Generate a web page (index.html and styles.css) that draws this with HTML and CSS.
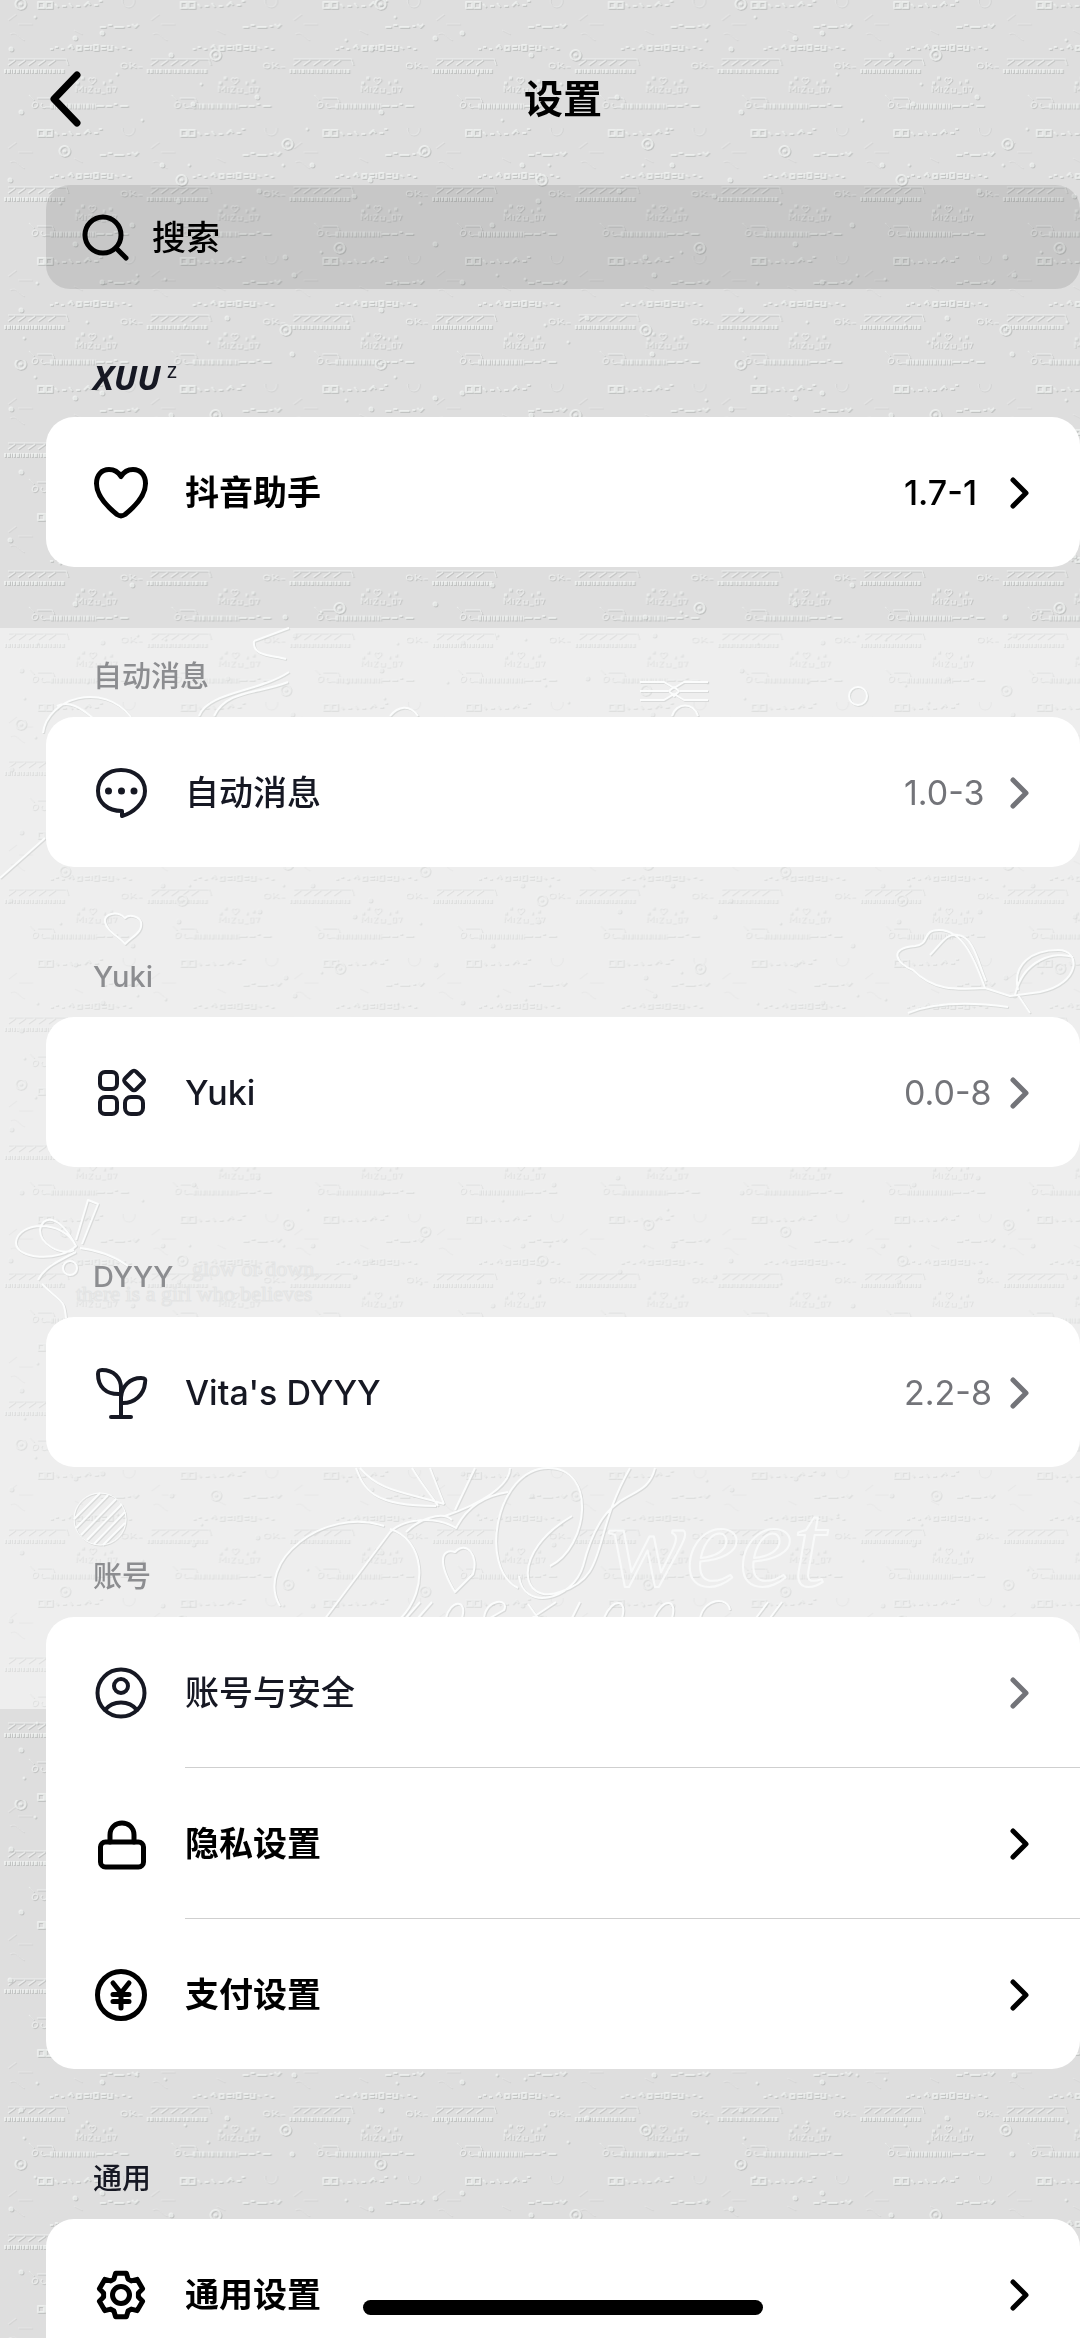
FILE: index.html
```
<!DOCTYPE html>
<html lang="zh-CN">
<head>
    <meta charset="UTF-8">
    <meta name="viewport" content="width=device-width, initial-scale=1.0">
    <title>设置</title>
    <link rel="stylesheet" href="styles.css">
</head>
<body>
    <!-- Embossed wallpaper -->
    <svg class="wallpaper" aria-hidden="true">
        <defs>
            <g id="marks" fill="none">
                <path d="M50 49h3m2-2h3m3 2h3m4-1l3-3 2 4m4-3h4v4h-4zm7 0h5m-5 3h5m2-4v5m3-5h4v5h-4zm7 1h5m-5 3h5m2-4v5h4v-5m3 2l3 2m4-2h3m3 2h3" stroke-width="2"/>
                <path d="M8 59h58l2 6M8 65l7-5m3 5l7-5m3 5l7-5m3 5l7-5m3 5l7-5" stroke-width="1"/>
                <path d="M4 71h60" stroke-width="4" stroke-dasharray="2 1 3 1 1 1"/>
                <path d="M124 63c-4 0-4 5 0 5s4-5 0-5M130 62v6l5-5m-4 2l5 3M138 67h5" stroke-width="1"/>
                <path d="M76 83h3m2-5h3m19 5h2m4-2h3" stroke-width="3"/>
                <path d="M92 79c2-3 5 0 3 2l-3 3-3-3c-1-2 1-5 3-2z" stroke-width="1"/>
                <path d="M76 92v-6l3 4 3-4v6M85 92v-5M88 87h4l-4 5h4M95 88v4h4v-4M101 93h4M107 87h3v5h-3zM112 87h4l-2 5" stroke-width="1"/>
                <path d="M29 95l5 5m3-2h15l2 4m-21 1c-2 3 0 6 3 4 4-3 0-7-3-4zm9 0c-3 3 1 6 3 4h5" stroke-width="1"/>
                <path d="M50 106h46" stroke-width="5" stroke-dasharray="3 1 1 1 2 1"/>
                <path d="M96 106h8m2 0h6m2-2h3m3 2h8" stroke-width="2"/>
                <path d="M38 2h6v6h-6zM46 2h6v6h-6zM55 4l3 3m4-1h4m3-3l3 4m4-1h4m4 0l4-4 2 3m4 0h4m1-4h3" stroke-width="2"/>
                <path d="M100 27h6m2-2h4m2 2h10m3-1h3m2-2l3 3 3-3" stroke-width="2"/>
                <circle cx="128" cy="1" r="6" stroke-width="1" opacity="0.5"/>
                <path d="M8 20l8-6m2 10h14M10 34c6-4 8 4 14 6M74 30l8 4" stroke-width="1" opacity="0.4"/>
            </g>
            <g id="bubbles" fill="none" stroke-linecap="round">
                <path d="M102 33h0M171 55h0M257 97h0M21 112h0M193 104h0M162 165h0M312 165h0M10 180h0M259 191h0M354 196h0M178 201h0M132 225h0M75 244h0M285 257h0M102 282h0M294 275h0M21 310h0M227 318h0M292 354h0M75 38h0M11 49h0" stroke-width="5"/>
                <path d="M117 74h0M201 84h0M142 120h0M307 129h0M189 165h0M283 165h0M60 203h0M321 252h0M37 283h0M165 279h0M137 275h0M185 325h0M347 322h0M87 322h0M24 338h0M208 342h0M35 17h0M346 40h0" stroke-width="3"/>
                <path d="M20 -1a5 5 0 1 0 1 0M215 50a5 5 0 1 0 1 0M287 139a5 5 0 1 0 1 0M64 146a5 5 0 1 0 1 0M181 175a5 5 0 1 0 1 0M339 243a5 5 0 1 0 1 0M285 325a5 5 0 1 0 1 0" stroke-width="2"/>
                <path d="M20 4h1M215 55h1M287 144h1M64 151h1M181 180h1M339 248h1M285 330h1" stroke-width="3"/>
            </g>
            <g id="ornaments" fill="none" stroke-width="2">
                <!-- ribbons -->
                <path d="M43 733c4-35 60-52 88-16M57 706c12-6 24 2 36 12M254 641l35-13M254 641c-2 16 18 14 32 18M289 672c-30 20-82 20-90 44M288 682c-30 12-62 8-74 34M0 878l45-40M390 716c8-10 20-12 28 0"/>
                <path d="M640 682h24l10 6 10-6h24M640 700h24l10-6 10 6h24M640 691h28M680 691h28M674 687l5 4-5 5-5-5z"/>
                <circle cx="858" cy="696" r="9"/>
                <path d="M672 716c4-14 22-14 26 0"/>
                <path d="M125 918c-8-8-22-4-20 4 2 10 14 14 20 22 8-8 18-12 16-22-2-6-12-8-16-4z"/>
                <!-- bows -->
                <path d="M985 988c-8-22-20-58-46-58-18 0-8 14-24 16-28 2-18 18-2 24 20 20 40 20 72 18M930 955c12-12 16-22 28-20 16 2 20 28 28 46M1018 990c-6-26 14-40 40-40 24 0 22 34-18 42l-30 4-25-8M1015 995c8-36 40-44 58-38M908 1013c30-12 70-10 100-6M1018 995l12 18"/>
                <path d="M76 1246c-14-28-58-24-60-4-1 18 44 20 60 4zM76 1246c-18-34-34-30-36-16 0 14 20 26 34 20M76 1240l12-40 10 4-16 40M80 1248c16 2 32 6 48 18M76 1252c-20 10-32 16-38 28M42 1284c20 20 22 14 24 34"/>
                <circle cx="70" cy="1268" r="7"/>
                <!-- striped ball -->
                <circle cx="100" cy="1519" r="26" stroke-width="1"/>
                <path d="M74 1519l26-26M76 1528l32-33M81 1535l35-36M87 1540l35-36M94 1544l31-32M103 1545l22-22"/>
                <!-- lettering flourishes -->
                <path d="M356 1468c8 20 14 38 80 38M360 1468c20 24 46 24 84 36M412 1468c12 20 20 28 26 38M430 1468l14 36M475 1468l-20 42M510 1468c0 18-30 36-65 48M508 1492c-26 4-42 16-52 36-20-12-52-10-66 4M384 1526c-60-20-130 36-104 80M390 1532l-66 88M390 1529c34 10 40 60 10 90M452 1520c-10-10-34 0-46 12"/>
                <path d="M455 1592c-18-30-14-44 0-40 12-12 24 4 18 22zM518 1588c-40-20-22-120 30-120 50 0 40 80 2 98M655 1468c-10 40-50 10-72 98-10 34-60 46-64 10M630 1468c-40 70-20 108-70 124-40 14-50-40 12-76"/>
                <path d="M420 1602l-14 16M432 1602l-14 16M446 1618c4-18 22-20 16 0M484 1618c2-20 26-20 20-8l-14 8M528 1604l10 14M556 1602l-24 16M580 1602l-8 16M604 1618c8-20 24-20 18 0M654 1618c8-20 24-20 18 0M700 1618c4-20 28-22 30-8M768 1602l-12 16M782 1602l-12 16"/>
            </g>
            <pattern id="text-tile" width="142.7" height="128" patternUnits="userSpaceOnUse">
                <use href="#marks" class="shade" x="1" y="1"/>
                <use href="#marks" class="shine"/>
            </pattern>
            <pattern id="text-tile-low" href="#text-tile" patternTransform="translate(0 62)"/>
            <pattern id="bubble-tile" width="360" height="360" patternUnits="userSpaceOnUse">
                <use href="#bubbles" class="shade" x="1" y="1"/>
                <use href="#bubbles" class="shine"/>
            </pattern>
        </defs>
        <rect class="paper" width="100%" height="100%"/>
        <rect width="100%" height="100%" fill="url(#text-tile)"/>
        <rect width="100%" height="100%" fill="url(#bubble-tile)"/>
        <rect class="paper-light" y="628" width="100%" height="1081"/>
        <g class="light-marks">
            <rect y="628" width="100%" height="1081" fill="url(#text-tile-low)"/>
            <rect y="628" width="100%" height="1081" fill="url(#bubble-tile)"/>
        </g>
        <use href="#ornaments" class="shade soft" x="1" y="1"/>
        <use href="#ornaments" class="shine bright"/>
        <text class="script" x="606" y="1586">weet</text>
        <g class="verse">
            <text x="192" y="1276">glow or down,</text>
            <text x="76" y="1301">there is a girl who believes</text>
        </g>
    </svg>

    <!-- Row icons -->
    <svg class="sprite" aria-hidden="true">
        <symbol id="chevron" viewBox="0 0 20 34"><path d="M4 4l13 13L4 30"/></symbol>
        <symbol id="heart" viewBox="0 0 60 60"><path d="M30 13.500c-3-5-7-7-12-7C10.500 6.500 5.500 12 5.500 20.500c0 13 13 25 20.500 31 3 2 5 2 8 0 7.500-6 20.500-18 20.500-31 0-8.500-5-14-12.500-14-5 0-9 2-12 7z"/></symbol>
        <symbol id="chat" viewBox="0 0 60 60"><path d="M31 53v-5C16 48 7 39 7 28 7 15 17 7 30 7s24 8 24 21c0 12-12 22-23 25z"/><path d="M17.500 28h0M30.500 28h0M43 28h0" stroke-width="7"/></symbol>
        <symbol id="apps" viewBox="0 0 60 60"><rect x="9" y="9" width="17" height="17" rx="5"/><rect x="9" y="34" width="17" height="17" rx="5"/><rect x="34" y="34" width="18" height="17" rx="6"/><path d="M40.500 9l-6 6c-2 2-2 3 0 5l6 6c2 2 3 2 5 0l6-6c2-2 2-3 0-5l-6-6c-2-2-3-2-5 0z"/></symbol>
        <symbol id="sprout" viewBox="0 0 60 60"><path d="M30 31C14 32 7 23 7 11c0-3 1-4 4-4 12 0 19 8 19 18zM30 40V34c1-11 9-19 20-19 4 0 5 1 4 5-1 11-10 21-24 20zM30 24v30M20 54h20"/></symbol>
        <symbol id="person" viewBox="0 0 60 60"><circle cx="30" cy="30" r="23.500"/><circle cx="30" cy="23" r="7"/><path d="M14 47c8-10 24-10 32 0"/></symbol>
        <symbol id="lock" viewBox="0 0 60 60"><rect x="9.500" y="28" width="43" height="25" rx="5"/><path d="M19 28v-7c0-16 24-16 24 0v7"/></symbol>
        <symbol id="yen" viewBox="0 0 60 60"><circle cx="30" cy="30" r="23.500"/><path d="M22 18l8 10 8-10M30 28v15M22 29.500h16M22 36.500h16"/></symbol>
        <symbol id="gear" viewBox="0 0 60 60"><path d="M24.600 8.200H35.400L37.100 14 40.300 15.900 46.200 14.400 51.600 23.800 47.400 28.100V31.900L51.600 36.200 46.200 45.600 40.300 44.100 37.100 46 35.400 51.800H24.600L22.900 46 19.700 44.100 13.800 45.600 8.400 36.200 12.600 31.900V28.100L8.400 23.800 13.800 14.400 19.700 15.900 22.900 14z"/><circle cx="30" cy="30" r="8.500"/></symbol>
    </svg>

    <header class="topbar">
        <button class="back" aria-label="返回">
            <svg viewBox="0 0 36 60"><path d="M31 6L8 30l23 24"/></svg>
        </button>
        <h1>设置</h1>
    </header>

    <main class="content">
        <label class="search">
            <svg viewBox="0 0 48 48"><circle cx="21" cy="21" r="18"/><path d="M34 34l10 10"/></svg>
            <input type="search" placeholder="搜索" aria-label="搜索">
        </label>

        <section class="group strong">
            <h2 class="brand">XUU<sup>z</sup></h2>
            <div class="card">
                <a class="row" href="#">
                    <svg class="icon"><use href="#heart"/></svg>
                    <span class="name">抖音助手</span>
                    <span class="version">1.7-1</span>
                    <svg class="arrow"><use href="#chevron"/></svg>
                </a>
            </div>
        </section>

        <section class="group">
            <h2>自动消息</h2>
            <div class="card">
                <a class="row" href="#">
                    <svg class="icon"><use href="#chat"/></svg>
                    <span class="name">自动消息</span>
                    <span class="version">1.0-3</span>
                    <svg class="arrow"><use href="#chevron"/></svg>
                </a>
            </div>
        </section>

        <section class="group">
            <h2>Yuki</h2>
            <div class="card">
                <a class="row" href="#">
                    <svg class="icon"><use href="#apps"/></svg>
                    <span class="name">Yuki</span>
                    <span class="version">0.0-8</span>
                    <svg class="arrow"><use href="#chevron"/></svg>
                </a>
            </div>
        </section>

        <section class="group">
            <h2>DYYY</h2>
            <div class="card">
                <a class="row" href="#">
                    <svg class="icon"><use href="#sprout"/></svg>
                    <span class="name">Vita's DYYY</span>
                    <span class="version">2.2-8</span>
                    <svg class="arrow"><use href="#chevron"/></svg>
                </a>
            </div>
        </section>

        <section class="group">
            <h2>账号</h2>
            <div class="card">
                <a class="row" href="#">
                    <svg class="icon"><use href="#person"/></svg>
                    <span class="name">账号与安全</span>
                    <svg class="arrow"><use href="#chevron"/></svg>
                </a>
                <hr>
                <a class="row strong" href="#">
                    <svg class="icon"><use href="#lock"/></svg>
                    <span class="name">隐私设置</span>
                    <svg class="arrow"><use href="#chevron"/></svg>
                </a>
                <hr>
                <a class="row strong" href="#">
                    <svg class="icon"><use href="#yen"/></svg>
                    <span class="name">支付设置</span>
                    <svg class="arrow"><use href="#chevron"/></svg>
                </a>
            </div>
        </section>

        <section class="group strong">
            <h2>通用</h2>
            <div class="card">
                <a class="row" href="#">
                    <svg class="icon"><use href="#gear"/></svg>
                    <span class="name">通用设置</span>
                    <svg class="arrow"><use href="#chevron"/></svg>
                </a>
            </div>
        </section>
    </main>

    <div class="home"><span></span></div>
</body>
</html>
```
FILE: styles.css
```
* {
    box-sizing: border-box;
}

body {
    margin: 0;
    height: 100vh;
    display: flex;
    flex-direction: column;
    overflow: hidden;
    background-color: #dedede;
    color: #161823;
    font-family: Inter, "Noto Sans CJK SC", sans-serif;
}

svg {
    fill: none;
    stroke: currentColor;
    stroke-width: 5;
    stroke-linecap: round;
    stroke-linejoin: round;
}

/* Wallpaper */
.wallpaper {
    position: fixed;
    top: 0;
    left: 0;
    width: 100%;
    height: 100%;
    z-index: -1;
    stroke: none;
    stroke-linecap: butt;
}

.paper {
    fill: #dedede;
}

.paper-light {
    fill: #eeeeee;
}

.shade {
    stroke: #aeb0af;
    opacity: 0.6;
}

.shine {
    stroke: #f4f6f5;
    opacity: 0.7;
}

.soft {
    stroke: #cccecd;
}

.bright {
    stroke: #fbfcfc;
    opacity: 1;
}

.light-marks {
    opacity: 0.4;
}

.script {
    font: italic 120px "Liberation Serif", serif;
    stroke: #f8f9f9;
    stroke-width: 2;
}

.verse {
    font: 22px "Liberation Serif", serif;
    stroke: #e3e4e4;
    stroke-width: 1;
}

.sprite {
    position: absolute;
    width: 0;
    height: 0;
}

/* Header */
.topbar {
    display: grid;
    grid-template-columns: 1fr auto 1fr;
    align-items: center;
    height: 185px;
    padding: 12px 0 0 46px;
    color: #000;
}

.topbar h1 {
    margin: 0;
    font-size: 39px;
    line-height: 56px;
    font-weight: 700;
}

.back {
    width: 36px;
    height: 60px;
    padding: 0;
    border: 0;
    background: none;
    color: inherit;
}

.back svg {
    display: block;
    width: 36px;
    height: 60px;
    stroke-width: 7;
}

/* Content */
.content {
    flex: 1;
    min-height: 0;
    padding-left: 46px;
    overflow-y: auto;
    scrollbar-width: none;
}

.search {
    display: flex;
    align-items: center;
    gap: 22px;
    height: 104px;
    padding: 2px 34px 0 36px;
    border-radius: 24px;
    background-color: rgba(0, 0, 0, 0.1);
    color: #000;
}

.search svg {
    width: 48px;
    height: 48px;
}

.search input {
    flex: 1;
    min-width: 0;
    padding: 0;
    border: 0;
    outline: 0;
    background: none;
    color: inherit;
    font: 500 34px/50px Inter, "Noto Sans CJK SC", sans-serif;
}

.search input::placeholder {
    color: #000;
    opacity: 1;
}

.group h2 {
    margin: 0;
    padding: 90px 0 20px 47px;
    font-size: 29px;
    line-height: 40px;
    font-weight: 500;
    color: #8c8d90;
}

.search + .group h2 {
    padding-top: 68px;
}

.group.strong h2 {
    color: #161823;
}

.group.strong .brand {
    font: italic 700 34px/40px "Noto Sans", sans-serif;
}

.brand sup {
    margin-left: 6px;
    font-size: 22px;
    font-style: normal;
    font-weight: 400;
    line-height: 0;
}

.card {
    border-radius: 28px;
    background-color: #fff;
    overflow: hidden;
}

.card hr {
    height: 1px;
    margin: 0 0 0 139px;
    border: 0;
    background-color: #cfcfcf;
}

.row {
    display: flex;
    align-items: center;
    height: 150px;
    padding: 1px 51px 0 45px;
    color: #161823;
    font-size: 34px;
    line-height: 50px;
    font-weight: 500;
    text-decoration: none;
}

.icon {
    width: 60px;
    height: 60px;
    margin-right: 34px;
    stroke-width: 4;
}

.name {
    flex: 1;
}

.version {
    width: 105px;
    color: #737479;
    font-weight: 400;
}

.arrow {
    width: 20px;
    height: 34px;
    color: #737479;
}

.strong .row,
.row.strong {
    color: #000;
    font-weight: 700;
}

.strong .version,
.strong .arrow {
    color: #000;
    font-weight: 500;
}

.strong .icon {
    stroke-width: 5;
}

/* Home indicator */
.home {
    position: fixed;
    left: 46px;
    right: 0;
    bottom: 23px;
    display: flex;
    justify-content: center;
}

.home span {
    width: 400px;
    height: 15px;
    border-radius: 8px;
    background-color: #000;
}
```
